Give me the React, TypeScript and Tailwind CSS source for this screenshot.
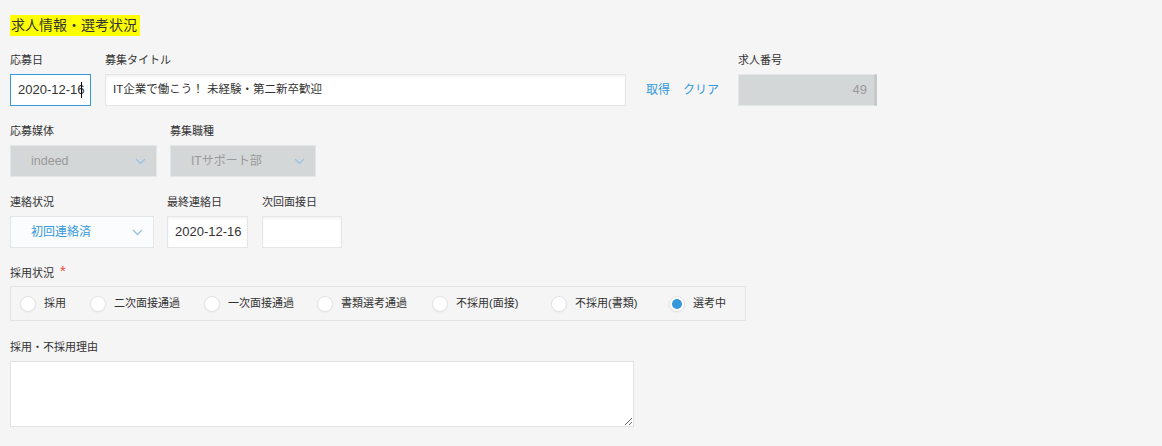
import React from "react";

const inputBox =
  "h-[32px] border border-[#e3e7e8] bg-white shadow-[inset_0_2px_3px_rgba(0,0,0,0.05)]";

function Label({ children }: { children: React.ReactNode }) {
  return <div className="h-[20px] mb-[4px] text-[11px] leading-[20px] text-[#333]">{children}</div>;
}

function Chevron() {
  return (
    <svg width="11" height="7" viewBox="0 0 11 7" fill="none" className="shrink-0">
      <path d="M1 1l4.5 4.5L10 1" stroke="#9cc3e6" strokeWidth="1.4" />
    </svg>
  );
}

const radios = [
  { label: "採用", w: "w-[70px]" },
  { label: "二次面接通過", w: "w-[114px]" },
  { label: "一次面接通過", w: "w-[113px]" },
  { label: "書類選考通過", w: "w-[115px]" },
  { label: "不採用(面接)", w: "w-[119px]" },
  { label: "不採用(書類)", w: "w-[118px]" },
  { label: "選考中", w: "w-[70px]", checked: true },
];

export default function App() {
  return (
    <div className="min-h-screen bg-[#f5f5f5] pl-[10px] pt-[15px] text-[#333] font-['Liberation_Sans','Noto_Sans_CJK_JP',sans-serif]">
      {/* Section title */}
      <div className="flex">
        <span className="bg-[#ffff00] text-[14px] leading-[21px] pl-[1px] pr-[3px]">求人情報・選考状況</span>
      </div>

      {/* Row 1 */}
      <div className="flex mt-[14px]">
        <div className="w-[81px] mr-[14px]">
          <Label>応募日</Label>
          <div className="h-[32px] border border-[#3498db] bg-white pl-[7px] flex items-center overflow-hidden whitespace-nowrap text-[13px]">
            2020-12-16
            <span className="inline-block w-px h-[16px] bg-black -ml-[4px]" />
          </div>
        </div>
        <div className="w-[521px]">
          <Label>募集タイトル</Label>
          <div className={`${inputBox} pl-[7px] flex items-center text-[11.5px]`}>
            IT企業で働こう！ 未経験・第二新卒歓迎
          </div>
        </div>
        <div className="pt-[24px] ml-[20px] h-[56px] flex items-center gap-[13px] text-[12px] text-[#3498db]">
          <span>取得</span>
          <span>クリア</span>
        </div>
        <div className="ml-[19px] w-[139px]">
          <Label>求人番号</Label>
          <div className="h-[32px] bg-[#d4d7d7] border border-[#e3e7e8] border-r-[3px] border-r-[#c6c9c9] flex items-center justify-end pr-[7px] text-[13px] text-[#999]">
            49
          </div>
        </div>
      </div>

      {/* Row 2 */}
      <div className="flex mt-[15px] gap-[13px]">
        <div className="w-[147px]">
          <Label>応募媒体</Label>
          <div className="h-[32px] bg-[#d4d7d7] border border-[#e3e7e8] flex items-center justify-between pl-[20px] pr-[10px] text-[12.5px] text-[#999]">
            <span>indeed</span>
            <Chevron />
          </div>
        </div>
        <div className="w-[146px]">
          <Label>募集職種</Label>
          <div className="h-[32px] bg-[#d4d7d7] border border-[#e3e7e8] flex items-center justify-between pl-[20px] pr-[10px] text-[12px] text-[#999]">
            <span>ITサポート部</span>
            <Chevron />
          </div>
        </div>
      </div>

      {/* Row 3 */}
      <div className="flex mt-[15px]">
        <div className="w-[144px] mr-[13px]">
          <Label>連絡状況</Label>
          <div className="h-[32px] bg-[#fbfcfd] border border-[#e3e7e8] flex items-center justify-between pl-[20px] pr-[10px] text-[12px] text-[#3498db]">
            <span>初回連絡済</span>
            <Chevron />
          </div>
        </div>
        <div className="w-[81px] mr-[14px]">
          <Label>最終連絡日</Label>
          <div className={`${inputBox} pl-[7px] flex items-center text-[13px]`}>2020-12-16</div>
        </div>
        <div className="w-[80px]">
          <Label>次回面接日</Label>
          <div className={inputBox} />
        </div>
      </div>

      {/* Row 4 */}
      <div className="mt-[14px]">
        <Label>
          採用状況<span className="ml-[6px] text-[#e74c3c] text-[15px] relative top-[-1px]">*</span>
        </Label>
        <div className="w-[736px] h-[35px] border border-[#e3e3e3] flex items-center pl-[9px]">
          {radios.map((r) => (
            <div key={r.label} className={`${r.w} flex items-center shrink-0`}>
              <span className="w-[16px] h-[16px] rounded-full bg-white border border-[#e3e3e3] shadow-[0_1px_2px_rgba(0,0,0,0.04)] flex items-center justify-center shrink-0">
                {r.checked && <span className="w-[10px] h-[10px] rounded-full bg-[#3498db]" />}
              </span>
              <span className="ml-[8px] text-[11px] whitespace-nowrap">{r.label}</span>
            </div>
          ))}
        </div>
      </div>

      {/* Row 5 */}
      <div className="mt-[16px]">
        <Label>採用・不採用理由</Label>
        <textarea className="block w-[624px] h-[66px] bg-white border border-[#e3e3e3] outline-none" />
      </div>
    </div>
  );
}
